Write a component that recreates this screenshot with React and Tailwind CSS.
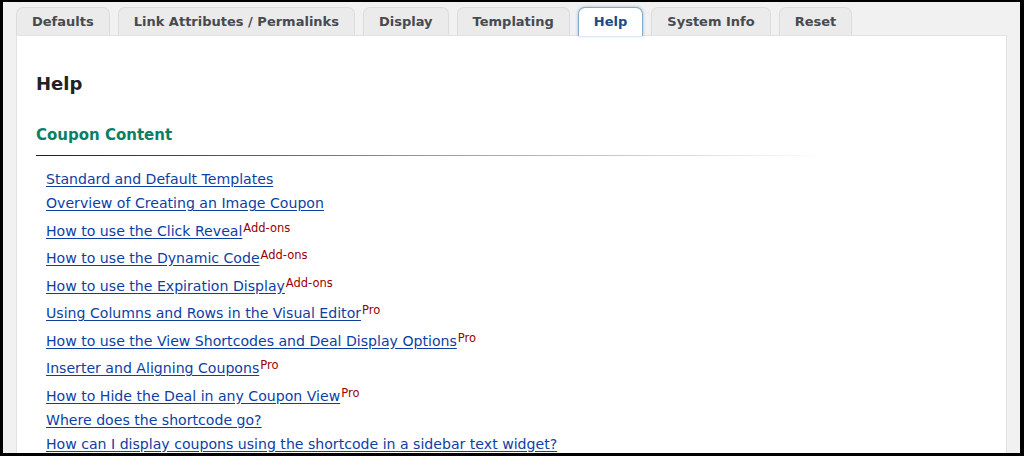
import React from 'react';

const tabs = [
  'Defaults',
  'Link Attributes / Permalinks',
  'Display',
  'Templating',
  'Help',
  'System Info',
  'Reset',
];

const links = [
  { text: 'Standard and Default Templates' },
  { text: 'Overview of Creating an Image Coupon' },
  { text: 'How to use the Click Reveal', tag: 'Add-ons' },
  { text: 'How to use the Dynamic Code', tag: 'Add-ons' },
  { text: 'How to use the Expiration Display', tag: 'Add-ons' },
  { text: 'Using Columns and Rows in the Visual Editor', tag: 'Pro' },
  { text: 'How to use the View Shortcodes and Deal Display Options', tag: 'Pro' },
  { text: 'Inserter and Aligning Coupons', tag: 'Pro' },
  { text: 'How to Hide the Deal in any Coupon View', tag: 'Pro' },
  { text: 'Where does the shortcode go?' },
  { text: 'How can I display coupons using the shortcode in a sidebar text widget?' },
];

export default function App() {
  return (
    <div className="w-[1024px] h-[456px] bg-black pt-[2px] pr-[4px] pb-[3px] pl-[3px] font-['DejaVu_Sans',Verdana,sans-serif]">
      <div className="h-full bg-[#f1f1f1] overflow-hidden flex flex-col pt-[5px] px-[13px]">
        {/* Tabs */}
        <div className="flex gap-[8px] items-end">
          {tabs.map((t) =>
            t === 'Help' ? (
              <div
                key={t}
                className="relative z-10 -mb-px h-[29px] px-[15px] flex items-center rounded-t-[7px] border border-b-0 border-[#86a9cf] bg-white shadow-[0_0_3px_rgba(34,113,177,0.45)] text-[13px] font-bold text-[#1b4a84]"
              >
                {t}
              </div>
            ) : (
              <div
                key={t}
                className="h-[28px] px-[15px] flex items-center rounded-t-[7px] border border-b-0 border-[#dcdcde] bg-[#ebebeb] text-[13px] font-bold text-[#474a4f]"
              >
                {t}
              </div>
            )
          )}
        </div>

        {/* Panel */}
        <div className="flex-1 bg-white border border-[#e2e2e2] px-[19px] pt-[35px]">
          <h1 className="text-[18px] leading-[26px] font-bold text-[#1d2327]">Help</h1>
          <h2 className="mt-[28px] text-[15px] leading-[20px] font-bold text-[#0b7f66]">Coupon Content</h2>
          <div className="mt-[10px] h-px w-[790px] bg-linear-to-r from-[#1e1e1e] via-[#9a9a9a] to-transparent" />
          <ul className="mt-[11px] pl-[10px]">
            {links.map((l) => (
              <li
                key={l.text}
                className={`text-[14.1px] leading-[24px] ${l.tag ? 'pt-[3.5px]' : ''}`}
              >
                <a href="#" className="text-[#0d3ea3] underline underline-offset-[2px]">
                  {l.text}
                </a>
                {l.tag && (
                  <sup className="text-[11.5px] text-[#990000] relative -top-[4px] ml-px">{l.tag}</sup>
                )}
              </li>
            ))}
          </ul>
        </div>
      </div>
    </div>
  );
}
